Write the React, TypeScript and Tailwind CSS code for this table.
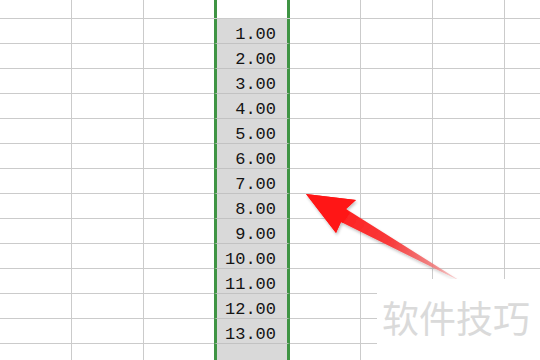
import React from "react";

const rows = Array.from({ length: 14 }, (_, i) => i);

function Cell({ w, last }: { w: string; last?: boolean }) {
  return <div className={`${w} h-full shrink-0 ${last ? "" : "border-r border-[#cbcbcb]"}`} />;
}

export default function App() {
  return (
    <div className="relative w-[540px] h-[360px] overflow-hidden bg-white" style={{ fontFamily: '"Liberation Mono", monospace' }}>
      <div className="flex flex-col">
        {/* top partial row */}
        <div className="flex h-[19px] border-b border-[#cbcbcb] box-border">
          <Cell w="w-[72px]" />
          <Cell w="w-[72px]" />
          <div className="w-[70px] shrink-0" />
          <div className="w-[76px] shrink-0 border-x-[3px] border-[#3f9444] bg-white" />
          <Cell w="w-[71px]" />
          <Cell w="w-[72px]" />
          <Cell w="w-[72px]" />
          <Cell w="flex-1" last />
        </div>
        {rows.map((i) => (
          <div key={i} className="flex h-[25px] border-b border-[#cbcbcb] box-border">
            <Cell w="w-[72px]" />
            <Cell w="w-[72px]" />
            <div className="w-[70px] shrink-0" />
            <div className="w-[76px] shrink-0 border-x-[3px] border-[#3f9444] bg-[#d9d9d9] flex items-end justify-end pr-[11px] -mb-px border-b border-b-[#c2c2c2]">
              {i < 13 && (
                <span className="text-[17px] leading-[16px] text-[#141414]">{(i + 1).toFixed(2)}</span>
              )}
            </div>
            <Cell w="w-[71px]" />
            <Cell w="w-[72px]" />
            <Cell w="w-[72px]" />
            <Cell w="flex-1" last />
          </div>
        ))}
      </div>

      <svg className="absolute left-0 top-0" width="540" height="360" viewBox="0 0 540 360">
        <defs>
          <linearGradient id="shaft" x1="330" y1="210" x2="462" y2="282" gradientUnits="userSpaceOnUse">
            <stop offset="0" stopColor="#ff1c1c" />
            <stop offset="0.45" stopColor="#f83a3a" />
            <stop offset="0.8" stopColor="#f07a7a" stopOpacity="0.85" />
            <stop offset="1" stopColor="#f5b0b0" stopOpacity="0.35" />
          </linearGradient>
          <filter id="sh" x="-20%" y="-20%" width="140%" height="140%">
            <feGaussianBlur in="SourceAlpha" stdDeviation="1.5" />
            <feOffset dx="1" dy="2" result="b" />
            <feComponentTransfer>
              <feFuncA type="linear" slope="0.25" />
            </feComponentTransfer>
            <feMerge>
              <feMergeNode />
              <feMergeNode in="SourceGraphic" />
            </feMerge>
          </filter>
        </defs>
        <g filter="url(#sh)">
          <polygon points="306,194 356,200 346,209 462,282 341,222 336,233" fill="url(#shaft)" />
          <polygon points="306,194 356,200 346,209 350,213 343,223 341,222 336,233" fill="#ff1818" />
        </g>
      </svg>

      <div className="absolute left-[377px] top-[279px] w-[163px] h-[81px] bg-white">
        <div
          className="absolute left-[5px] top-[16px] text-[37px] leading-[44px] text-[#dadada] whitespace-nowrap"
          style={{ fontFamily: '"Noto Sans CJK SC", sans-serif' }}
        >
          软件技巧
        </div>
      </div>
    </div>
  );
}
